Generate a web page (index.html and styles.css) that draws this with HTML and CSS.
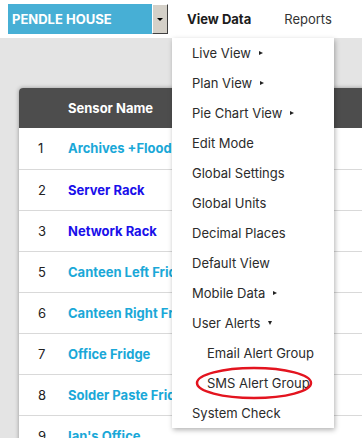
FILE: index.html
```html
<!DOCTYPE html>
<html>
<head>
  <meta charset="UTF-8">
  <title>Sensors</title>
  <link rel="stylesheet" href="styles.css">
</head>
<body>
  <header class="topbar">
    <div class="site-select">
      <span class="site-name">PENDLE HOUSE</span>
      <span class="site-arrow"><i></i></span>
    </div>
    <nav class="nav">
      <a class="nav-link active">View Data</a>
      <a class="nav-link">Reports</a>
    </nav>
  </header>

  <main class="page">
    <table class="sensors">
      <thead>
        <tr><th class="col-num"></th><th>Sensor Name</th></tr>
      </thead>
      <tbody>
        <tr><td class="col-num">1</td><td class="name">Archives +Flood</td></tr>
        <tr><td class="col-num">2</td><td class="name name-blue">Server Rack</td></tr>
        <tr><td class="col-num">3</td><td class="name name-blue">Network Rack</td></tr>
        <tr><td class="col-num">5</td><td class="name">Canteen Left Fridge</td></tr>
        <tr><td class="col-num">6</td><td class="name">Canteen Right Fridge</td></tr>
        <tr><td class="col-num">7</td><td class="name">Office Fridge</td></tr>
        <tr><td class="col-num">8</td><td class="name">Solder Paste Fridge</td></tr>
        <tr><td class="col-num">9</td><td class="name">Ian's Office</td></tr>
      </tbody>
    </table>
  </main>

  <!-- View Data dropdown -->
  <ul class="menu">
    <li>Live View <span class="caret-right"></span></li>
    <li>Plan View <span class="caret-right"></span></li>
    <li>Pie Chart View <span class="caret-right"></span></li>
    <li>Edit Mode</li>
    <li>Global Settings</li>
    <li>Global Units</li>
    <li>Decimal Places</li>
    <li>Default View</li>
    <li>Mobile Data <span class="caret-right"></span></li>
    <li>User Alerts <span class="caret-down"></span></li>
    <li class="sub">Email Alert Group</li>
    <li class="sub highlight">SMS Alert Group
      <svg class="ring" width="122" height="36" viewBox="0 0 122 36"><ellipse cx="61" cy="18" rx="57" ry="15" fill="none" stroke="#e3141f" stroke-width="2.5"/></svg>
    </li>
    <li>System Check</li>
  </ul>
</body>
</html>
```

FILE: styles.css
```css
* {
  box-sizing: border-box;
  margin: 0;
  padding: 0;
}

body {
  font-family: Inter, 'Open Sans', sans-serif;
  font-size: 13px;
  color: #333;
  background: #ffffff;
  width: 362px;
  height: 438px;
  overflow: hidden;
  position: relative;
}

/* Top bar */
.topbar {
  height: 38px;
  display: flex;
  align-items: center;
  padding-left: 8px;
  background: #ffffff;
}

.site-select {
  display: flex;
  width: 160px;
  height: 30px;
}

.site-name {
  flex: 1;
  background: #47afd5;
  color: #ffffff;
  font-weight: 700;
  font-size: 13px;
  display: flex;
  align-items: center;
  padding-left: 4px;
}

.site-arrow {
  width: 16px;
  background: #d4d0c8;
  border-top: 1px solid #ffffff;
  border-left: 1px solid #ffffff;
  border-right: 1px solid #404040;
  border-bottom: 1px solid #404040;
  display: flex;
  align-items: center;
  justify-content: center;
}

.site-arrow i {
  border-top: 3px solid #000;
  border-left: 3px solid transparent;
  border-right: 3px solid transparent;
}

.nav {
  display: flex;
  margin-left: 19px;
  gap: 33px;
}

.nav-link {
  color: #333;
  font-size: 13px;
}

.nav-link.active {
  font-weight: 700;
  color: #1c1c1c;
}

/* Page */
.page {
  background: #e4e4e4;
  height: 400px;
  padding: 50px 0 0 19px;
  overflow: hidden;
}

.sensors {
  width: 360px;
  border-collapse: collapse;
  background: #ffffff;
  border-radius: 4px 0 0 0;
  box-shadow: 0 0 4px rgba(0,0,0,0.35);
  overflow: hidden;
}

.sensors th {
  background: #4d4d4d;
  color: #ffffff;
  font-weight: 700;
  height: 40px;
  text-align: left;
}

.sensors td {
  height: 41px;
  border-bottom: 1px solid #d9d9d9;
  white-space: nowrap;
}

.col-num {
  width: 49px;
  padding-left: 19px;
  color: #222;
}

.name {
  font-weight: 700;
  color: #1aa8d8;
}

.name-blue {
  color: #1a10ea;
}

/* Dropdown */
.menu {
  position: absolute;
  left: 172px;
  top: 38px;
  width: 162px;
  list-style: none;
  background: #ffffff;
  box-shadow: 1px 2px 5px rgba(0,0,0,0.3);
}

.menu li {
  height: 30px;
  display: flex;
  align-items: center;
  padding-left: 20px;
  color: #2b2b2b;
  white-space: nowrap;
}

.menu li.sub {
  padding-left: 35px;
}

.highlight {
  position: relative;
}

.ring {
  position: absolute;
  left: 21px;
  top: -3px;
}

.caret-right {
  display: inline-block;
  margin-left: 8px;
  border-left: 4px solid #222;
  border-top: 2.5px solid transparent;
  border-bottom: 2.5px solid transparent;
}

.caret-down {
  display: inline-block;
  margin-left: 8px;
  border-top: 4px solid #222;
  border-left: 2.5px solid transparent;
  border-right: 2.5px solid transparent;
}
```
